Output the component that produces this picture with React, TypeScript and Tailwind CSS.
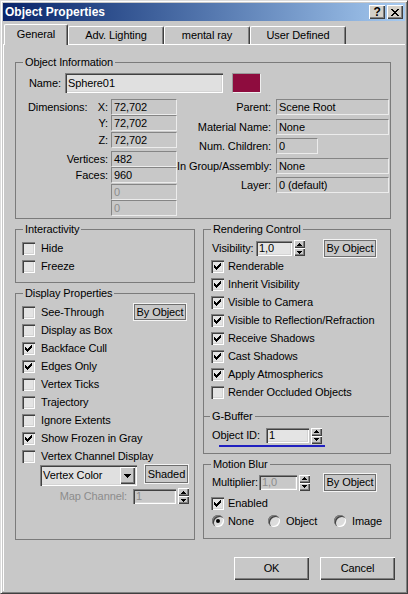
import type { ReactNode } from "react";

type Px = [number, number, number];

const CHECK: Px[] = [[6, 0, 1], [5, 1, 2], [0, 2, 1], [4, 2, 3], [0, 3, 2], [3, 3, 3], [0, 4, 5], [1, 5, 3], [2, 6, 1]];
const CLOSE: Px[] = [[0, 0, 2], [6, 0, 2], [1, 1, 2], [5, 1, 2], [2, 2, 4], [3, 3, 2], [2, 4, 4], [1, 5, 2], [5, 5, 2], [0, 6, 2], [6, 6, 2]];
const UP: Px[] = [[2, 0, 1], [1, 1, 3], [0, 2, 5]];
const DOWN: Px[] = [[0, 0, 5], [1, 1, 3], [2, 2, 1]];
const DROP: Px[] = [[0, 0, 7], [1, 1, 5], [2, 2, 3], [3, 3, 1]];

const SUNKEN = "shadow-[inset_1px_1px_#808080,inset_2px_2px_#404040,inset_-1px_-1px_#ffffff,inset_-2px_-2px_#d4d4d4]";
const RAISED = "shadow-[inset_1px_1px_#ffffff,inset_-1px_-1px_#404040,inset_-2px_-2px_#808080]";

const Glyph = ({ rows, w, h }: { rows: Px[]; w: number; h: number }) => (
  <svg width={w} height={h} viewBox={`0 0 ${w} ${h}`} shapeRendering="crispEdges">
    {rows.map(([x, y, len], i) => (
      <rect key={i} x={x} y={y} width={len} height={1} fill="currentColor" />
    ))}
  </svg>
);

const Group = ({ title, className, children }: { title: string; className: string; children?: ReactNode }) => (
  <div className={`border border-[#7b7b7b] ${className}`}>
    <div className="-mt-[7px] -mb-[6px] ml-[7px] h-[13px] w-fit bg-[#c8c8c8] px-[2px] leading-[13px]">{title}</div>
    {children}
  </div>
);

const Check = ({ on }: { on?: boolean }) => (
  <div className={`flex h-[13px] w-[13px] shrink-0 items-center justify-center bg-[#e4e4e4] ${SUNKEN}`}>
    {on && <Glyph rows={CHECK} w={7} h={7} />}
  </div>
);

const CheckRow = ({ label, on, gap }: { label: string; on?: boolean; gap: string }) => (
  <div className="flex h-[18px] items-center">
    <Check on={on} />
    <span className={gap}>{label}</span>
  </div>
);

const Radio = ({ on }: { on?: boolean }) => (
  <div className="flex h-[12px] w-[12px] shrink-0 items-center justify-center rounded-full bg-[#dcdcdc] shadow-[inset_1px_1px_#808080,inset_2px_2px_#404040,inset_-1px_-1px_#ffffff]">
    {on && <div className="h-[4px] w-[4px] rounded-full bg-black" />}
  </div>
);

const Info = ({ w, children, dim }: { w: string; children?: ReactNode; dim?: boolean }) => (
  <div
    className={`h-[16px] ${w} border border-[#858585] border-r-[#ececec] border-b-[#ececec] pl-[2px] leading-[14px] ${dim ? "text-[#8c8c8c]" : ""}`}
  >
    {children}
  </div>
);

const Spinner = () => (
  <div className="ml-[2px] flex h-[16px] w-[11px] flex-col">
    <div className={`flex flex-1 items-center justify-center bg-[#c8c8c8] ${RAISED}`}>
      <Glyph rows={UP} w={5} h={3} />
    </div>
    <div className={`flex flex-1 items-center justify-center bg-[#c8c8c8] ${RAISED}`}>
      <Glyph rows={DOWN} w={5} h={3} />
    </div>
  </div>
);

const SpinEdit = ({ w, value, disabled }: { w: string; value: string; disabled?: boolean }) => (
  <div className="flex items-center">
    <div
      className={`h-[15px] ${w} ${SUNKEN} ${disabled ? "bg-[#c8c8c8] text-[#8c8c8c]" : "bg-[#e4e4e4]"} pl-[3px] leading-[15px]`}
    >
      {value}
    </div>
    <Spinner />
  </div>
);

const ToggleButton = ({ label, className }: { label: string; className: string }) => (
  <div
    className={`flex items-center justify-center border border-[#f4f4f4] shadow-[inset_0_0_0_1px_#6e6e6e] ${className}`}
  >
    {label}
  </div>
);

const PushButton = ({ label }: { label: string }) => (
  <div className={`flex h-[23px] w-[75px] items-center justify-center bg-[#c8c8c8] ${RAISED}`}>{label}</div>
);

const TitleBar = () => (
  <div className="flex h-[18px] items-center justify-between bg-linear-to-r from-[#0a246a] to-[#a6caf0] pl-[2px] pr-[2px]">
    <span className="text-[12px] font-bold leading-[14px] tracking-normal text-white">Object Properties</span>
    <div className="flex gap-[2px]">
      <div className={`flex h-[14px] w-[16px] items-center justify-center bg-[#d4d0c8] text-[12px] font-bold leading-[12px] ${RAISED}`}>
        ?
      </div>
      <div className={`flex h-[14px] w-[16px] items-center justify-center bg-[#d4d0c8] ${RAISED}`}>
        <Glyph rows={CLOSE} w={8} h={7} />
      </div>
    </div>
  </div>
);

const Tabs = () => (
  <div className="mt-[3px] flex h-[20px] pl-[1px]">
    <div className="relative z-10 flex h-[21px] w-[64px] items-center justify-center rounded-t-[2px] border-t border-r border-l border-t-white border-r-[#404040] border-l-white bg-[#c8c8c8] pb-[1px] shadow-[inset_-1px_0_#808080]">
      General
    </div>
    {[
      ["Adv. Lighting", "w-[96px]"],
      ["mental ray", "w-[86px]"],
      ["User Defined", "w-[96px]"]
    ].map(([label, w]) => (
      <div
        key={label}
        className={`mt-[2px] flex h-[18px] ${w} items-center justify-center rounded-t-[2px] border-t border-r border-l border-t-white border-r-[#404040] border-l-white shadow-[inset_-1px_0_#808080]`}
      >
        {label}
      </div>
    ))}
  </div>
);

const ObjectInformation = () => (
  <Group title="Object Information" className="h-[157px] w-[376px]">
    <div className="mt-[10px] flex h-[20px] items-center pl-[13px]">
      <span className="w-[36px]">Name:</span>
      <div className={`flex h-[20px] w-[158px] items-center bg-[#e0e0e0] pl-[3px] ${SUNKEN}`}>Sphere01</div>
      <div className="ml-[9px] h-[20px] w-[29px] border border-[#9a9a9a] border-r-[#eeeeee] border-b-[#eeeeee] bg-[#8e0c3e]" />
    </div>

    <div className="mt-[6px] flex">
      <div className="w-[161px]">
        <div className="flex h-[16px] items-center">
          <div className="flex w-[92px] justify-between pl-[12px]">
            <span>Dimensions:</span>
            <span>X:</span>
          </div>
          <div className="ml-[3px]">
            <Info w="w-[66px]">72,702</Info>
          </div>
        </div>
        {[
          ["Y:", "72,702", ""],
          ["Z:", "72,702", "mt-[1px]"],
          ["Vertices:", "482", "mt-[3px]"],
          ["Faces:", "960", ""],
          ["", "0", "mt-[1px]"],
          ["", "0", ""]
        ].map(([label, value, mt], i) => (
          <div key={i} className={`flex h-[16px] items-center ${mt}`}>
            <span className="w-[92px] text-right">{label}</span>
            <div className="ml-[3px]">
              <Info w="w-[66px]" dim={label === ""}>
                {value}
              </Info>
            </div>
          </div>
        ))}
      </div>

      <div className="w-[212px]">
        {[
          ["Parent:", "Scene Root", "", "w-[113px]"],
          ["Material Name:", "None", "mt-[4px]", "w-[113px]"],
          ["Num. Children:", "0", "mt-[3px]", "w-[42px]"],
          ["In Group/Assembly:", "None", "mt-[4px]", "w-[113px]"],
          ["Layer:", "0 (default)", "mt-[3px]", "w-[113px]"]
        ].map(([label, value, mt, w]) => (
          <div key={label} className={`flex h-[16px] items-center ${mt}`}>
            <span className="w-[95px] pr-[1px] text-right whitespace-nowrap">{label}</span>
            <div className="ml-[4px]">
              <Info w={w}>{value}</Info>
            </div>
          </div>
        ))}
      </div>
    </div>
  </Group>
);

const LeftColumn = () => (
  <div className="w-[180px]">
    <Group title="Interactivity" className="h-[54px]">
      <div className="mt-[9px] pl-[6px]">
        <CheckRow label="Hide" gap="ml-[6px]" />
        <CheckRow label="Freeze" gap="ml-[6px]" />
      </div>
    </Group>

    <Group title="Display Properties" className="mt-[10px] h-[247px]">
      <div className="mt-[9px] pl-[6px]">
        <div className="flex h-[18px] items-center justify-between pr-[7px]">
          <CheckRow label="See-Through" gap="ml-[6px]" />
          <ToggleButton label="By Object" className="h-[18px] w-[54px]" />
        </div>
        <CheckRow label="Display as Box" gap="ml-[6px]" />
        <CheckRow label="Backface Cull" on gap="ml-[6px]" />
        <CheckRow label="Edges Only" on gap="ml-[6px]" />
        <CheckRow label="Vertex Ticks" gap="ml-[6px]" />
        <CheckRow label="Trajectory" gap="ml-[6px]" />
        <CheckRow label="Ignore Extents" gap="ml-[6px]" />
        <CheckRow label="Show Frozen in Gray" on gap="ml-[6px]" />
        <CheckRow label="Vertex Channel Display" gap="ml-[6px]" />
      </div>
      <div className="flex items-start pl-[24px]">
        <div className={`flex h-[21px] w-[97px] items-center justify-between bg-[#e0e0e0] pr-[2px] pl-[3px] ${SUNKEN}`}>
          <span>Vertex Color</span>
          <div className={`flex h-[17px] w-[15px] items-center justify-center bg-[#c8c8c8] ${RAISED}`}>
            <Glyph rows={DROP} w={7} h={4} />
          </div>
        </div>
        <ToggleButton label="Shaded" className="-mt-[1px] ml-[7px] h-[20px] w-[45px]" />
      </div>
      <div className="mt-[2px] flex items-center">
        <span className="w-[111px] text-right text-[#8c8c8c]">Map Channel:</span>
        <div className="ml-[6px]">
          <SpinEdit w="w-[43px]" value="1" disabled />
        </div>
      </div>
    </Group>
  </div>
);

const RightColumn = () => (
  <div className="w-[188px]">
    <Group title="Rendering Control" className="h-[225px]">
      <div className="mt-[9px] flex h-[18px] items-center pl-[8px]">
        <span className="w-[44px]">Visibility:</span>
        <SpinEdit w="w-[36px]" value="1,0" />
        <ToggleButton label="By Object" className="ml-[18px] h-[19px] w-[54px]" />
      </div>
      <div className="pl-[7px]">
        <CheckRow label="Renderable" on gap="ml-[4px]" />
        <CheckRow label="Inherit Visibility" on gap="ml-[4px]" />
        <CheckRow label="Visible to Camera" on gap="ml-[4px]" />
        <CheckRow label="Visible to Reflection/Refraction" on gap="ml-[4px]" />
        <CheckRow label="Receive Shadows" on gap="ml-[4px]" />
        <CheckRow label="Cast Shadows" on gap="ml-[4px]" />
        <CheckRow label="Apply Atmospherics" on gap="ml-[4px]" />
        <CheckRow label="Render Occluded Objects" gap="ml-[4px]" />
      </div>

      <div className="mt-[15px] -ml-[1px] w-[186px] border-t border-[#7b7b7b]">
        <div className="-mt-[7px] -mb-[6px] ml-[7px] h-[13px] w-fit bg-[#c8c8c8] px-[2px] leading-[13px]">G-Buffer</div>
      </div>
      <div className="mt-[10px] flex h-[17px] items-center pl-[8px]">
        <span className="w-[54px]">Object ID:</span>
        <SpinEdit w="w-[43px]" value="1" />
      </div>
      <div className="mt-[1px] ml-[15px] h-[2px] w-[106px] bg-[#2020c0]" />
    </Group>

    <Group title="Motion Blur" className="mt-[10px] h-[75px]">
      <div className="mt-[8px] flex h-[19px] items-center pl-[8px]">
        <span className="w-[47px] whitespace-nowrap">Multiplier:</span>
        <SpinEdit w="w-[38px]" value="1,0" disabled />
        <ToggleButton label="By Object" className="ml-[13px] h-[19px] w-[54px]" />
      </div>
      <div className="mt-[2px] pl-[7px]">
        <CheckRow label="Enabled" on gap="ml-[4px]" />
      </div>
      <div className="flex h-[18px] items-center pl-[8px]">
        <div className="flex w-[56px] items-center">
          <Radio on />
          <span className="ml-[4px]">None</span>
        </div>
        <div className="flex w-[66px] items-center">
          <Radio />
          <span className="ml-[6px]">Object</span>
        </div>
        <div className="flex items-center">
          <Radio />
          <span className="ml-[6px]">Image</span>
        </div>
      </div>
    </Group>
  </div>
);

export default function App() {
  return (
    <div className="flex h-[594px] w-[408px] flex-col overflow-hidden border border-t-[#dcdcdc] border-r-[#404040] border-b-[#404040] border-l-[#dcdcdc] bg-[#c8c8c8] p-[2px] font-['Liberation_Sans',Arial,sans-serif] text-[11px] leading-[13px] tracking-[-0.1px] text-black shadow-[inset_1px_1px_#ffffff,inset_-1px_-1px_#808080]">
      <TitleBar />
      <Tabs />
      <div className="flex-1 border-t border-l border-white pt-[17px] pl-[11px]">
        <ObjectInformation />
        <div className="mt-[10px] flex gap-[8px]">
          <LeftColumn />
          <RightColumn />
        </div>
        <div className="mt-[17px] flex justify-end gap-[11px] pr-[10px]">
          <PushButton label="OK" />
          <PushButton label="Cancel" />
        </div>
      </div>
    </div>
  );
}
